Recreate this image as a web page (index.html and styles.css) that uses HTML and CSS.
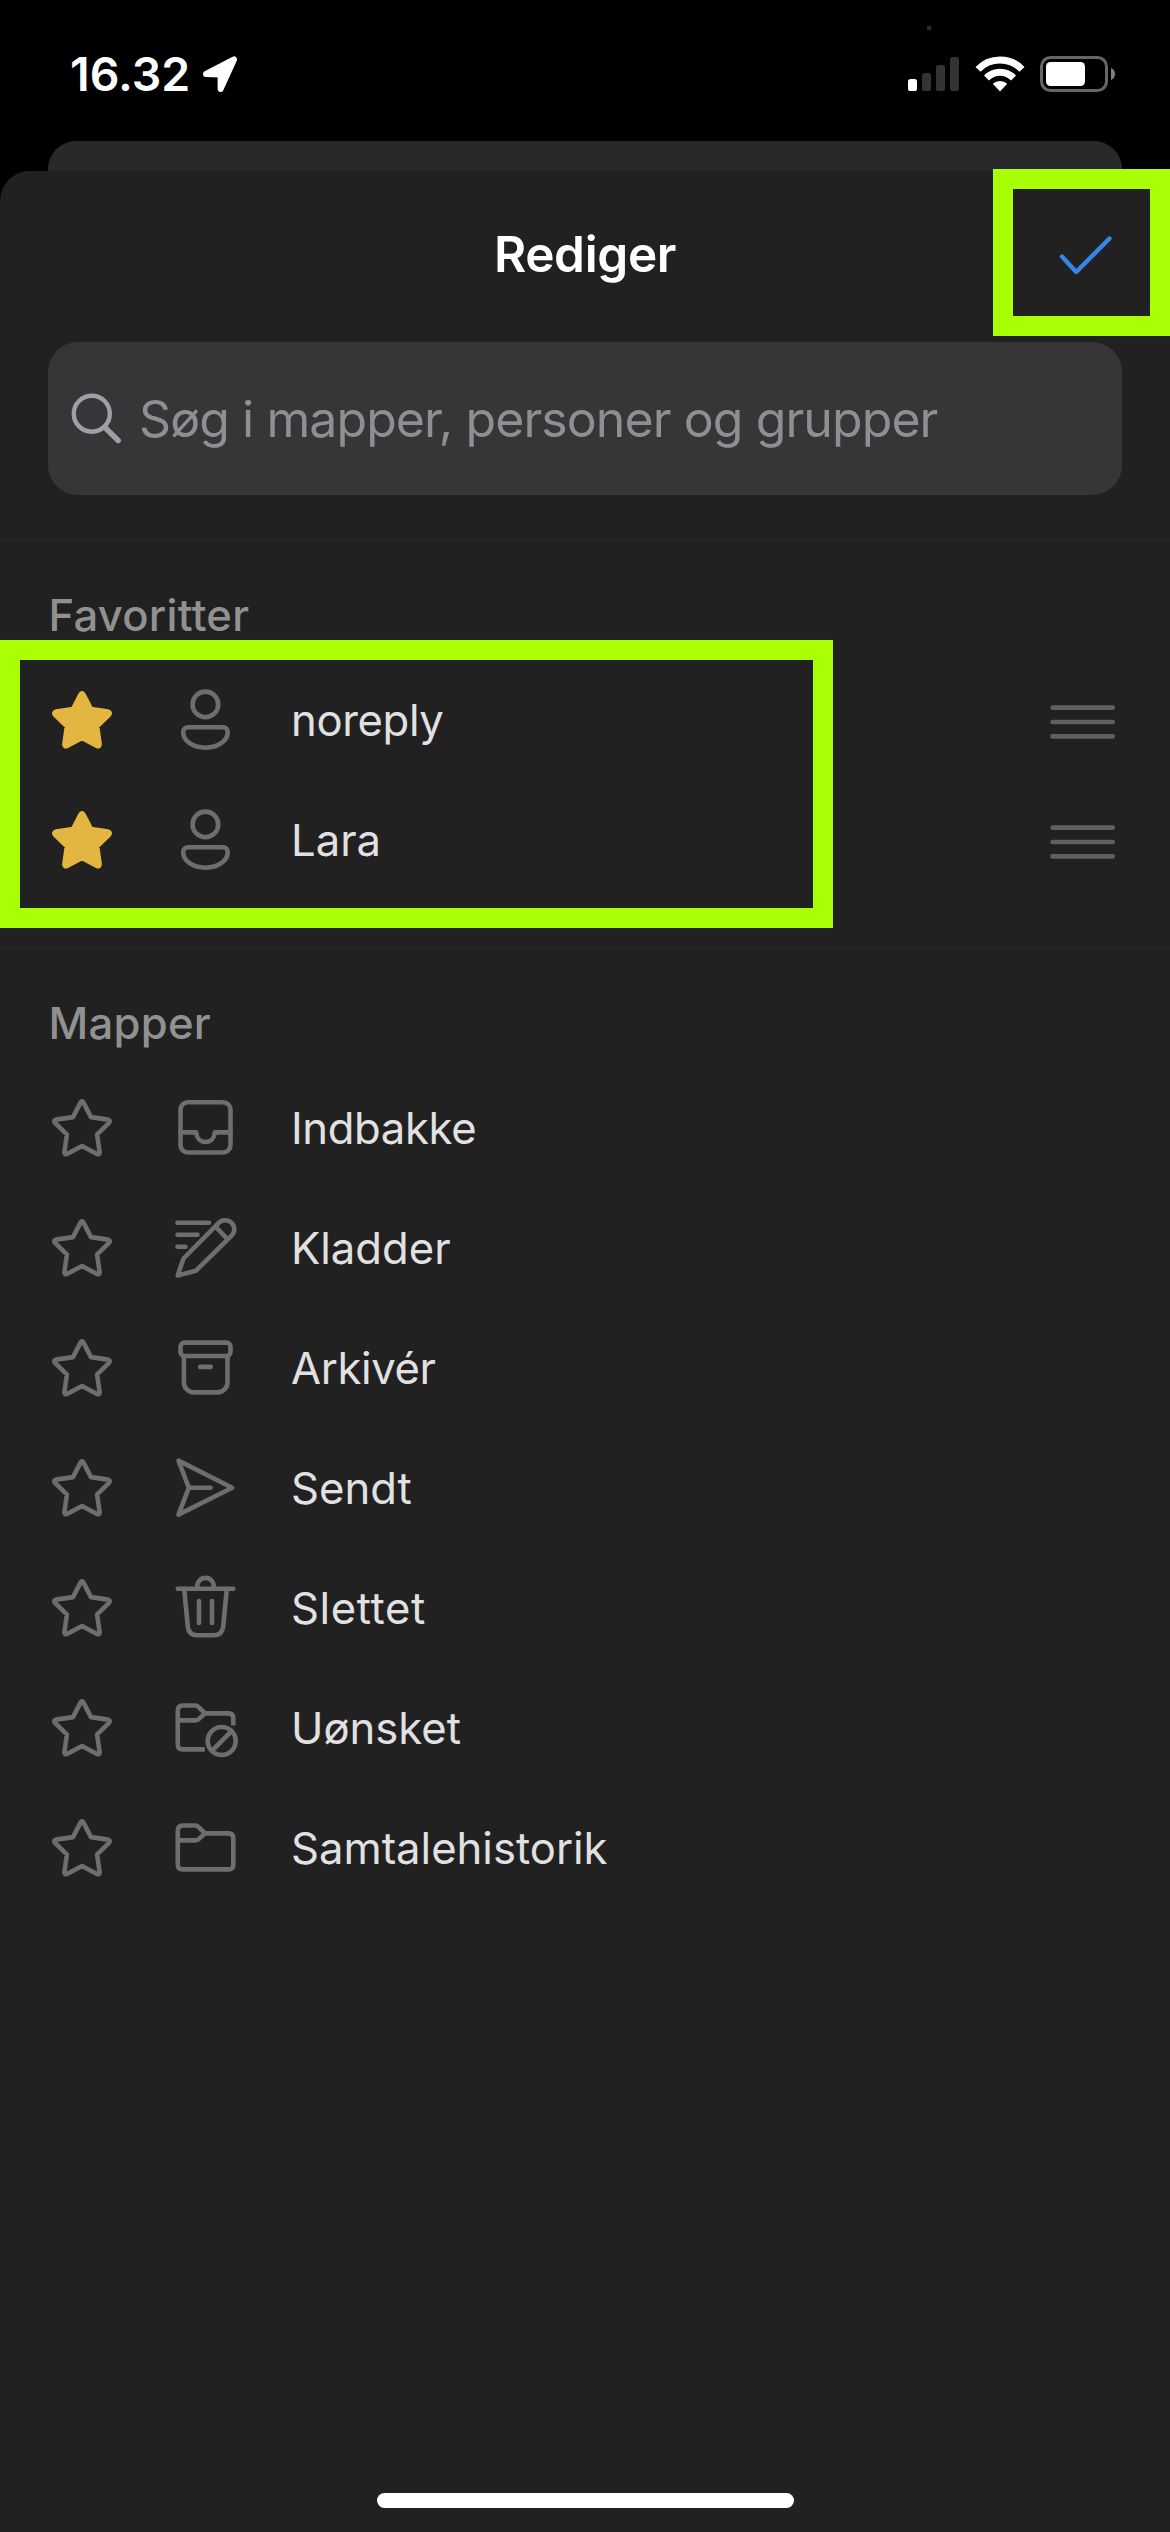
FILE: index.html
```html
<!DOCTYPE html>
<html lang="da">
<head>
<meta charset="utf-8">
<title>Rediger</title>
<link rel="stylesheet" href="styles.css">
</head>
<body>
<svg class="sprite" aria-hidden="true">
  <symbol id="star" viewBox="0 0 72 72"><path d="M34.5 10.6Q36 8.2 37.5 10.6L45 25.1L62 27.6Q65 28.4 63 30.9L51.1 42.4L53.6 60.2Q53.6 63 51 62L36 53.9L21 62Q18.4 63 18.4 60.2L20.9 42.4L9 30.9Q7 28.4 10 27.6L27 25.1Z"/></symbol>
  <symbol id="person" viewBox="0 0 72 72"><circle cx="36.4" cy="20.4" r="12.8"/><path d="M18.7 43.3H54.1A4.6 4.6 0 0 1 58.7 47.9C58.7 57 49 63.7 36.4 63.7S14.2 57 14.2 47.9A4.6 4.6 0 0 1 18.7 43.3Z"/></symbol>
  <symbol id="inbox" viewBox="0 0 72 72"><rect x="11.5" y="10.3" width="50" height="50.2" rx="7.5"/><path d="M11.5 40.4H27.2C27.6 46 31 50 36.5 50S45.4 46 45.8 40.4H61.5"/></symbol>
  <symbol id="draft" viewBox="0 0 72 72"><path d="M8.5 10.7H40M8.5 22.7H28.5M8.5 34.7H16.5"/><path d="M8.7 63.5L14.5 46.5L49.8 10.9A9 9 0 0 1 62.6 23.7L26.8 58.8Z"/><path d="M46.5 14.6L58 26.6"/></symbol>
  <symbol id="archive" viewBox="0 0 72 72"><rect x="11.5" y="10.6" width="50" height="13.4" rx="4"/><path d="M14.9 24V50.4A10 10 0 0 0 24.9 60.4H48.5A10 10 0 0 0 58.5 50.4V24M31.2 34.9H41.8"/></symbol>
  <symbol id="send" viewBox="0 0 72 72"><path d="M9.5 8.6L63.2 35.7L9.5 62.6L19.8 35.7ZM19.8 35.7H41.5"/></symbol>
  <symbol id="trash" viewBox="0 0 72 72"><path d="M8.8 16.7H64.2M28.2 16.5V14.2A8.3 8.3 0 0 1 44.8 14.2V16.5M15.2 17L18.8 54.5Q19.8 63.3 28 63.3H45Q53.2 63.3 54.2 54.5L57.8 17M30 29V51M43 29V51"/></symbol>
  <symbol id="folder" viewBox="0 0 72 72"><path d="M14 13.5H26.2Q28 13.5 29.4 14.9L36 21.4H59.3Q64.3 21.4 64.3 26.4V52.4Q64.3 57.4 59.3 57.4H13.8Q8.8 57.4 8.8 52.4V18.5Q8.8 13.5 14 13.5ZM8.8 28.4H26.2Q28 28.4 29.4 27.4L36 21.4"/></symbol>
  <symbol id="junk" viewBox="0 0 72 72"><path class="butt" d="M64.3 33.6V26.4Q64.3 21.4 59.3 21.4H36L29.4 14.9Q28 13.5 26.2 13.5H13.8Q8.8 13.5 8.8 18.5V52.4Q8.8 57.4 13.8 57.4H35.8M8.8 28.4H26.2Q28 28.4 29.4 27.4L36 21.4"/><circle cx="52.7" cy="49" r="14"/><path d="M42.8 58.9L62.6 39.1"/></symbol>
  <symbol id="grip" viewBox="0 0 66 36"><path d="M2.6 3.6H62.8M2.6 18H62.8M2.6 32.4H62.8"/></symbol>
</svg>

<header class="status">
  <div class="clock"><span class="time">16.32</span>
    <svg class="arrow" viewBox="0 0 37 37"><path d="M4 18L32 3.4L18.6 33V18.4Z"/></svg>
  </div>
  <div class="indicators">
    <svg width="52" height="36" viewBox="0 0 52 36"><rect y="23" width="9" height="12" rx="2.6" fill="#fff"/><g fill="#333"><rect x="14" y="17" width="9" height="18" rx="2.6"/><rect x="28" y="9" width="9" height="26" rx="2.6"/><rect x="42" y="1" width="9" height="34" rx="2.6"/></g></svg>
    <svg width="50" height="36" viewBox="0 0 50 36"><g fill="none" stroke="#fff" stroke-width="7"><path d="M3 13.3A30.5 30.5 0 0 1 47 13.3"/><path d="M11.5 22A18.6 18.6 0 0 1 38.5 22"/></g><path d="M17.8 27.8A10.5 10.5 0 0 1 32.2 27.8L25 35.4Z" fill="#fff"/></svg>
    <svg width="76" height="36" viewBox="0 0 76 36"><rect x="1.5" y="1.5" width="65" height="33" rx="9" fill="none" stroke="#666" stroke-width="3"/><rect x="6" y="6" width="39" height="24" rx="4.5" fill="#fff"/><path d="M71 12Q75 13.6 75 18T71 24Z" fill="#808080"/></svg>
  </div>
  <i class="mic-dot"></i>
</header>

<div class="card-behind"></div>

<main class="sheet">
  <div class="titlebar">
    <h1 class="title">Rediger</h1>
    <svg class="check" viewBox="0 0 54 42"><path d="M3 21.5L17.2 37L50.5 3.5"/></svg>
  </div>
  <div class="search">
    <svg class="lens" viewBox="0 0 51 51"><circle cx="20.8" cy="20.7" r="18"/><path d="M34 34.5L47.2 47.5"/></svg>
    <span class="placeholder">Søg i mapper, personer og grupper</span>
  </div>

  <section class="section">
    <h2 class="heading">Favoritter</h2>
    <div class="row"><svg class="icon star on"><use href="#star"/></svg><svg class="icon"><use href="#person"/></svg><span class="label snug">noreply</span><svg class="grip"><use href="#grip"/></svg></div>
    <div class="row"><svg class="icon star on"><use href="#star"/></svg><svg class="icon"><use href="#person"/></svg><span class="label">Lara</span><svg class="grip"><use href="#grip"/></svg></div>
  </section>

  <section class="section">
    <h2 class="heading">Mapper</h2>
    <div class="row"><svg class="icon star"><use href="#star"/></svg><svg class="icon"><use href="#inbox"/></svg><span class="label snug">Indbakke</span></div>
    <div class="row"><svg class="icon star"><use href="#star"/></svg><svg class="icon"><use href="#draft"/></svg><span class="label">Kladder</span></div>
    <div class="row"><svg class="icon star"><use href="#star"/></svg><svg class="icon"><use href="#archive"/></svg><span class="label snug">Arkivér</span></div>
    <div class="row"><svg class="icon star"><use href="#star"/></svg><svg class="icon"><use href="#send"/></svg><span class="label">Sendt</span></div>
    <div class="row"><svg class="icon star"><use href="#star"/></svg><svg class="icon"><use href="#trash"/></svg><span class="label loose">Slettet</span></div>
    <div class="row"><svg class="icon star"><use href="#star"/></svg><svg class="icon"><use href="#junk"/></svg><span class="label">Uønsket</span></div>
    <div class="row"><svg class="icon star"><use href="#star"/></svg><svg class="icon"><use href="#folder"/></svg><span class="label">Samtalehistorik</span></div>
  </section>
  <div class="home-bar"></div>
</main>

<div class="marker marker-done"></div>
<div class="marker marker-favorites"></div>
</body>
</html>
```
FILE: styles.css
```css
* { box-sizing: border-box; margin: 0; }
body {
  position: relative;
  display: flex;
  flex-direction: column;
  width: 1170px;
  height: 2532px;
  overflow: hidden;
  background: #000;
  color: #fff;
  font-family: Inter, "Liberation Sans", sans-serif;
}
svg { display: block; flex: none; }
.sprite { position: absolute; width: 0; height: 0; }

.status {
  position: relative;
  display: flex;
  justify-content: space-between;
  height: 141px;
  padding: 56px 54px 0 70px;
}
.clock { display: flex; height: 36px; align-items: center; }
.time { width: 132px; font-size: 46.5px; font-weight: 600; letter-spacing: 0; }
.arrow { width: 37px; height: 37px; fill: #fff; stroke: #fff; stroke-width: 6; stroke-linejoin: round; }
.indicators { display: flex; gap: 15px; }
.mic-dot { position: absolute; left: 927px; top: 26px; width: 4px; height: 4px; background: #3f260b; }

.card-behind { height: 30px; margin: 0 48px; border-radius: 28px 28px 0 0; background: #29292a; }

.sheet {
  display: flex;
  flex-direction: column;
  flex: 1;
  border-radius: 30px 30px 0 0;
  background: #212121;
}
.titlebar {
  display: grid;
  grid-template-columns: 1fr auto 1fr;
  align-items: center;
  height: 166px;
  padding: 0 57px;
}
.title { grid-column: 2; font-size: 49.5px; font-weight: 600; letter-spacing: -0.35px; }
.check { width: 54px; height: 42px; margin-top: 3px; justify-self: end; fill: none; stroke: #3686e8; stroke-width: 4.4; stroke-linecap: round; stroke-linejoin: round; }

.search {
  display: flex;
  align-items: center;
  gap: 17px;
  height: 153px;
  margin: 5px 48px 45px;
  padding-left: 23px;
  border-radius: 30px;
  background: #363638;
}
.lens { width: 51px; height: 51px; fill: none; stroke: #a09fa6; stroke-width: 4.4; stroke-linecap: round; }
.lens path { stroke-width: 5.4; }
.placeholder { font-size: 50px; letter-spacing: -0.92px; color: #8e8e93; white-space: nowrap; }

.section { padding: 29px 0 48px; border-top: 1px solid #2a2a2b; }
.heading { height: 90px; padding-left: 48.5px; font-size: 43.6px; font-weight: 500; line-height: 91px; letter-spacing: 0.25px; color: #919191; }
.row { display: flex; align-items: center; height: 120px; padding: 0 54px 0 46px; }
.icon { width: 72px; height: 72px; margin-right: 50px; fill: none; stroke: #6e6e6e; stroke-width: 4.6; stroke-linecap: round; stroke-linejoin: round; }
.star { margin-right: 51px; }
.star.on { fill: #e2b641; stroke: #e2b641; }
.butt { stroke-linecap: butt; }
.label { flex: 1; font-size: 43.6px; color: #e1e1e1; }
.snug { letter-spacing: -0.35px; }
.loose { letter-spacing: 0.6px; }
.grip { width: 66px; height: 36px; margin-top: 3px; stroke: #606062; stroke-width: 4.6; stroke-linecap: round; }

.home-bar { width: 417px; height: 15px; margin: auto auto 24px 377px; border-radius: 8px; background: #fff; }

.marker { position: absolute; border: 20px solid #a9ff03; }
.marker-done { left: 993px; top: 169px; width: 177px; height: 167px; }
.marker-favorites { left: 0; top: 640px; width: 833px; height: 288px; }
```
